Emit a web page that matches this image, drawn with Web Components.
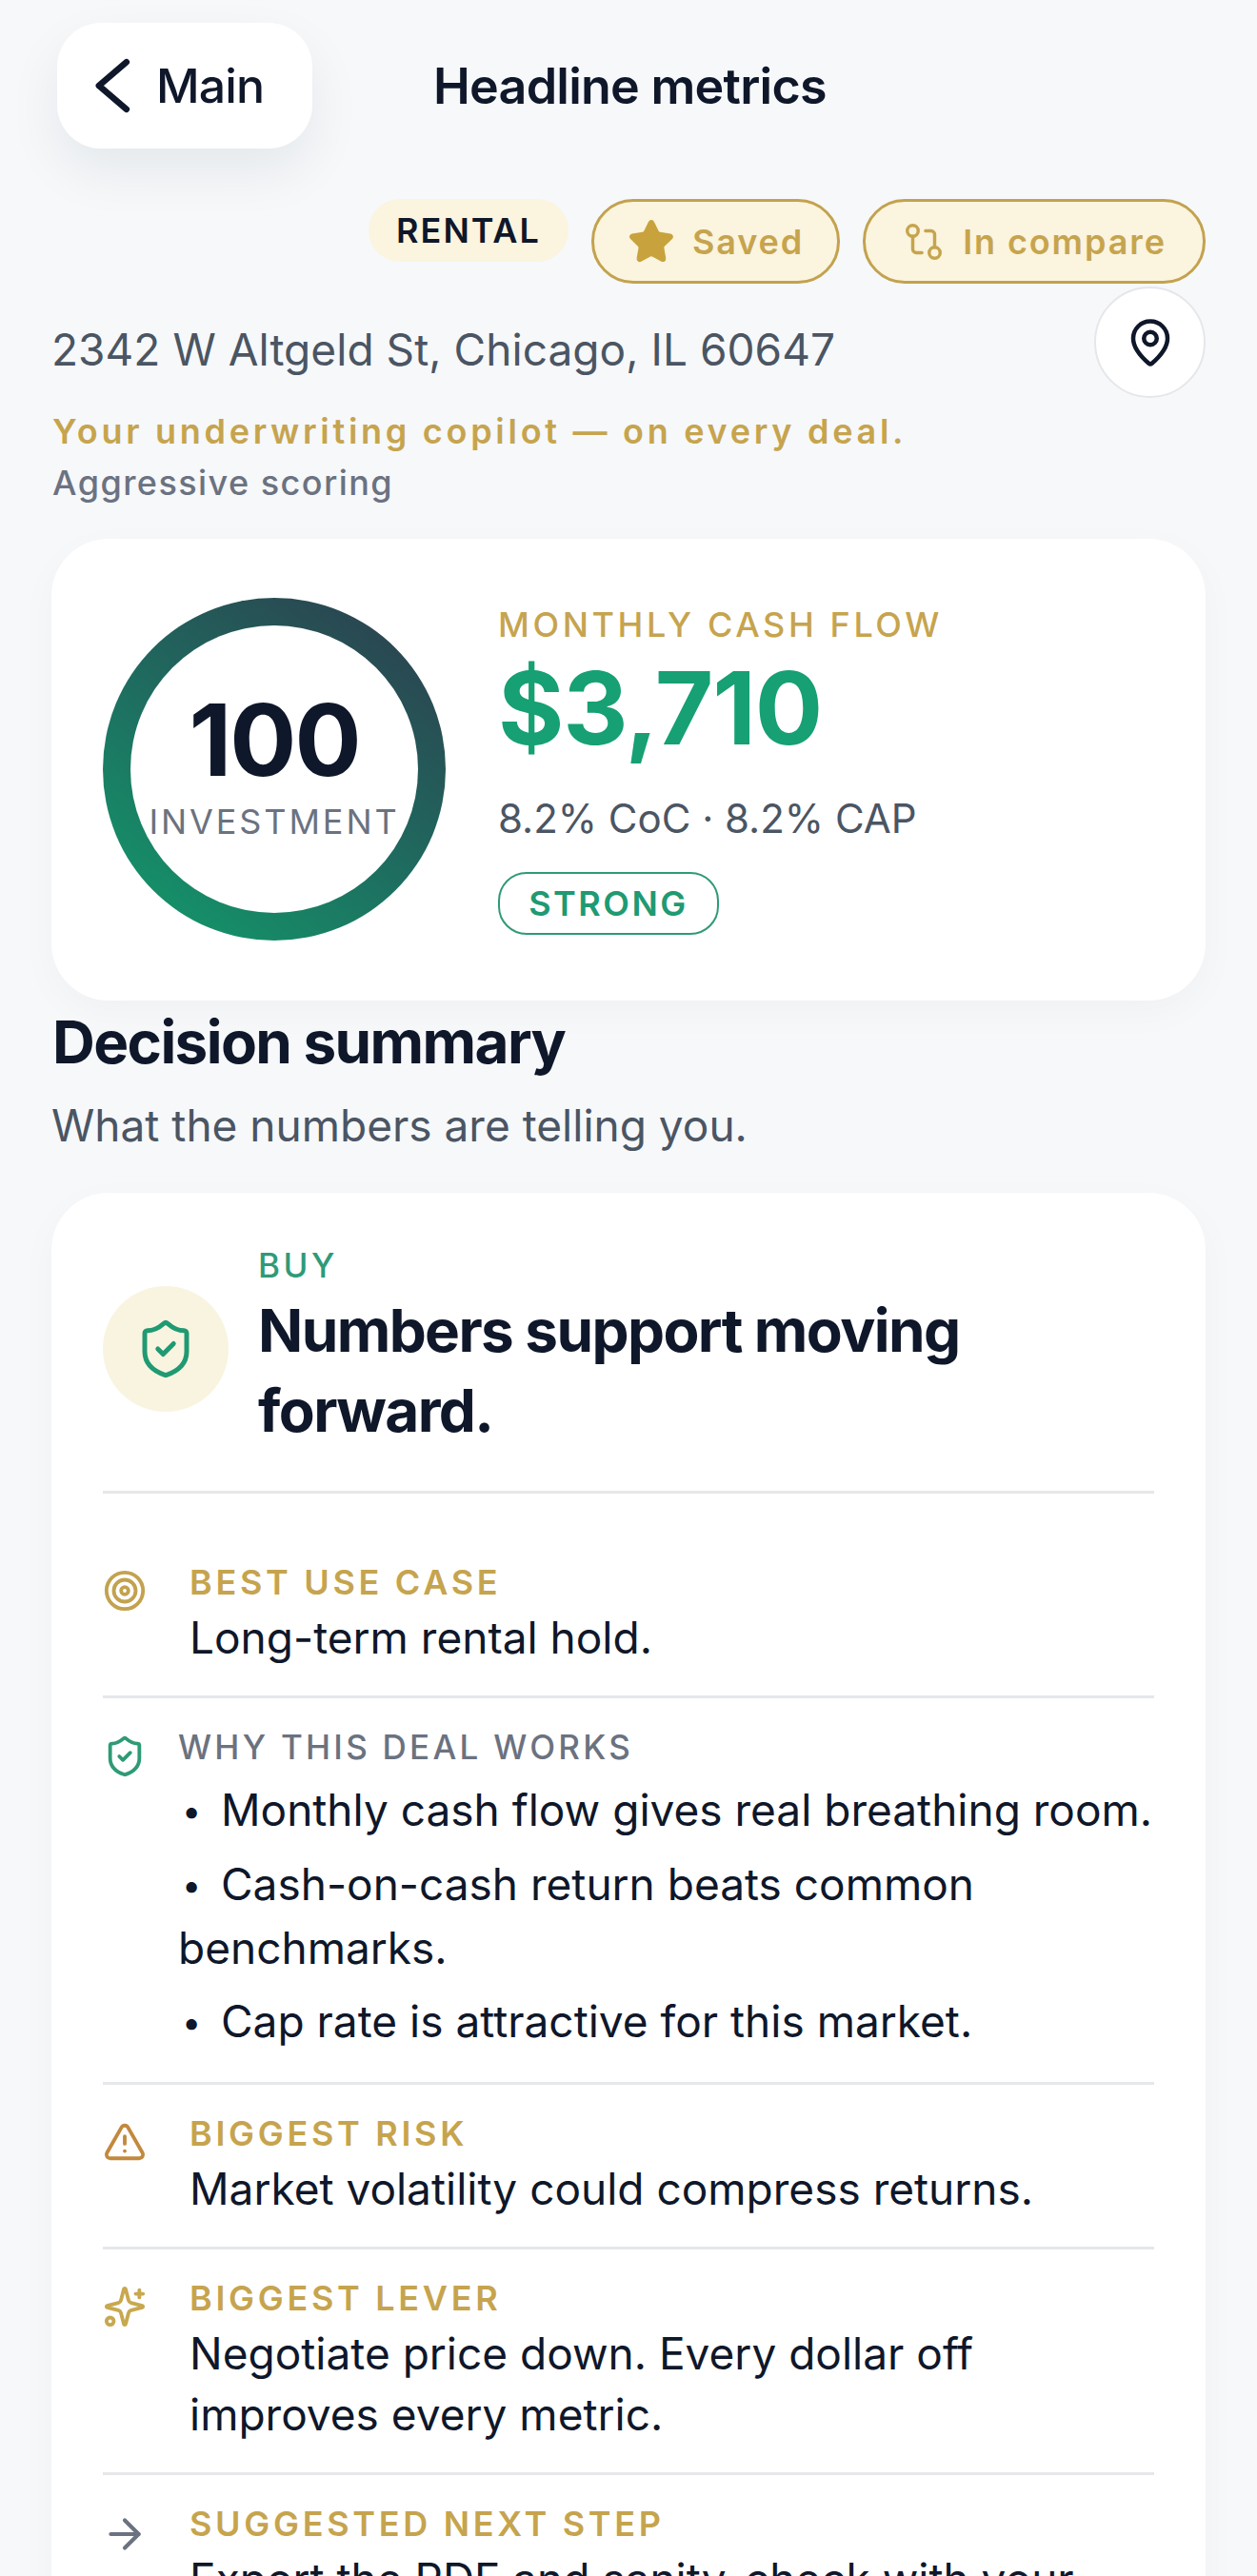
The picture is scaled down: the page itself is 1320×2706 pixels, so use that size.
<!DOCTYPE html>
<html lang="en">
<head>
<meta charset="utf-8">
<title>Headline metrics</title>
<style>
  html, body { margin: 0; height: 2706px; overflow: hidden; background: #f6f8fa; }
  body { font-family: Inter, "Liberation Sans", sans-serif; color: #0f172a; }
</style>
</head>
<body>
  <metrics-page>
    <top-bar slot="top" back="Main" title="Headline metrics"></top-bar>
    <tag-row slot="tags"></tag-row>
    <deal-address slot="address"
      address="2342 W Altgeld St, Chicago, IL 60647"
      tagline="Your underwriting copilot — on every deal."
      mode="Aggressive scoring"></deal-address>
    <score-card slot="score"></score-card>
    <decision-summary slot="summary">
      <detail-row icon="target" label="BEST USE CASE" class="first">Long-term rental hold.</detail-row>
      <detail-row icon="shield" label="WHY THIS DEAL WORKS" variant="list">
        <li>Monthly cash flow gives real breathing room.</li>
        <li>Cash-on-cash return beats common benchmarks.</li>
        <li>Cap rate is attractive for this market.</li>
      </detail-row>
      <detail-row icon="alert" label="BIGGEST RISK">Market volatility could compress returns.</detail-row>
      <detail-row icon="sparkles" label="BIGGEST LEVER">Negotiate price down. Every dollar off improves every metric.</detail-row>
      <detail-row icon="arrow" label="SUGGESTED NEXT STEP">Export the PDF and sanity-check with your lender.</detail-row>
    </decision-summary>
  </metrics-page>

<script>
const ICONS = {
  chevron: '<path d="M17 3 6.5 12 17 21"/>',
  star: '<path fill="currentColor" d="M11.5 2.3a.55.55 0 0 1 1 0l2.3 4.7a2 2 0 0 0 1.5 1.1l5.2.8a.55.55 0 0 1 .3.95l-3.75 3.65a2 2 0 0 0-.6 1.8l.9 5.15a.55.55 0 0 1-.8.6l-4.65-2.45a2 2 0 0 0-1.85 0L6.4 21.05a.55.55 0 0 1-.8-.6l.9-5.15a2 2 0 0 0-.6-1.8L2.15 9.85a.55.55 0 0 1 .3-.95l5.2-.8a2 2 0 0 0 1.5-1.1z"/>',
  compare: '<circle cx="18" cy="18" r="3"/><circle cx="6" cy="6" r="3"/><path d="M13 6h3a2 2 0 0 1 2 2v7"/><path d="M11 18H8a2 2 0 0 1-2-2V9"/>',
  pin: '<path d="M20 10c0 4.99-5.54 10.19-7.4 11.8a1 1 0 0 1-1.2 0C9.54 20.19 4 14.99 4 10a8 8 0 0 1 16 0"/><circle cx="12" cy="10" r="3"/>',
  shield: '<path d="M20 13c0 5-3.5 7.5-7.66 8.95a1 1 0 0 1-.67-.01C7.5 20.5 4 18 4 13V6a1 1 0 0 1 1-1c2 0 4.5-1.2 6.24-2.72a1.17 1.17 0 0 1 1.52 0C14.51 3.81 17 5 19 5a1 1 0 0 1 1 1z"/><path d="m9 12 2 2 4-4"/>',
  target: '<circle cx="12" cy="12" r="10"/><circle cx="12" cy="12" r="6"/><circle cx="12" cy="12" r="2"/>',
  alert: '<path d="m21.73 18-8-14a2 2 0 0 0-3.48 0l-8 14A2 2 0 0 0 4 21h16a2 2 0 0 0 1.73-3"/><path d="M12 9v4"/><path d="M12 17h.01"/>',
  sparkles: '<path d="M9.937 15.5A2 2 0 0 0 8.5 14.063l-6.135-1.582a.5.5 0 0 1 0-.962L8.5 9.936A2 2 0 0 0 9.937 8.5l1.582-6.135a.5.5 0 0 1 .963 0L14.063 8.5A2 2 0 0 0 15.5 9.937l6.135 1.581a.5.5 0 0 1 0 .964L15.5 14.063a2 2 0 0 0-1.437 1.437l-1.582 6.135a.5.5 0 0 1-.963 0z"/><path d="M20 3v4"/><path d="M22 5h-4"/><circle cx="4" cy="20" r="2"/>',
  arrow: '<path d="M5 12h14"/><path d="m12 5 7 7-7 7"/>'
};

class AppIcon extends HTMLElement {
  connectedCallback() {
    const size = this.getAttribute('size') || 48;
    const stroke = this.getAttribute('stroke') || 2;
    this.attachShadow({ mode: 'open' }).innerHTML = `
      <style>:host { display: inline-flex; flex: none; } svg { display: block; }</style>
      <svg width="${size}" height="${size}" viewBox="0 0 24 24" fill="none" stroke="currentColor"
        stroke-width="${stroke}" stroke-linecap="round" stroke-linejoin="round">${ICONS[this.getAttribute('name')]}</svg>`;
  }
}
customElements.define('app-icon', AppIcon);

class MetricsPage extends HTMLElement {
  constructor() {
    super();
    this.attachShadow({ mode: 'open' }).innerHTML = `
      <style>
        :host { display: block; padding: 24px 54px 0; }
      </style>
      <slot name="top"></slot>
      <slot name="tags"></slot>
      <slot name="address"></slot>
      <slot name="score"></slot>
      <slot name="summary"></slot>`;
  }
}
customElements.define('metrics-page', MetricsPage);

class TopBar extends HTMLElement {
  connectedCallback() {
    this.attachShadow({ mode: 'open' }).innerHTML = `
      <style>
        :host { display: flex; align-items: center; gap: 127px; height: 132px; margin-left: 6px; }
        .back {
          display: flex; align-items: center; gap: 12px;
          width: 268px; height: 132px; box-sizing: border-box; padding-left: 26px;
          background: #fff; border-radius: 46px; color: #0f172a;
          box-shadow: 0 24px 56px rgba(15, 23, 42, 0.07);
          font-size: 50px; font-weight: 500; letter-spacing: -0.9px;
        }
        h1 { margin: 0; font-size: 52px; font-weight: 600; letter-spacing: -0.75px; color: #0f172a; }
      </style>
      <div class="back"><app-icon name="chevron" size="66" stroke="2.4"></app-icon><span>${this.getAttribute('back')}</span></div>
      <h1>${this.getAttribute('title')}</h1>`;
  }
}
customElements.define('top-bar', TopBar);

class TagRow extends HTMLElement {
  constructor() {
    super();
    this.attachShadow({ mode: 'open' }).innerHTML = `
      <style>
        :host { display: flex; justify-content: flex-end; align-items: flex-start; gap: 24px; margin-top: 53px; }
        .pill {
          display: flex; align-items: center; justify-content: center; box-sizing: border-box;
          background: #fbf4de; border-radius: 44px;
        }
        .type { width: 210px; height: 66px; font-size: 36px; font-weight: 600; letter-spacing: 2px; color: #0f172a; border-radius: 33px; }
        .toggle {
          height: 89px; gap: 18px; border: 3px solid #c3a24f; color: #c6a44e;
          font-size: 36px; font-weight: 600; letter-spacing: 1.9px;
        }
        .saved { width: 261px; }
        .compare { width: 360px; }
        .saved app-icon { color: #c8a23c; }
      </style>
      <div class="pill type">RENTAL</div>
      <div class="pill toggle saved"><app-icon name="star" size="50"></app-icon><span>Saved</span></div>
      <div class="pill toggle compare"><app-icon name="compare" size="46" stroke="1.8"></app-icon><span>In compare</span></div>`;
  }
}
customElements.define('tag-row', TagRow);

class DealAddress extends HTMLElement {
  connectedCallback() {
    this.attachShadow({ mode: 'open' }).innerHTML = `
      <style>
        :host { display: block; margin-top: 3px; height: 265px; }
        .line { display: flex; justify-content: space-between; align-items: center; height: 117px; }
        .address { padding-top: 14px; font-size: 46px; letter-spacing: 0.05px; color: #4b5563; }
        .map {
          width: 117px; height: 117px; box-sizing: border-box; border-radius: 50%;
          border: 2px solid #e5e7eb; background: #fff; color: #0f172a;
          display: flex; align-items: center; justify-content: center;
        }
        .tagline { margin: 15px 0 0 1px; font-size: 36px; font-weight: 600; line-height: 40px; letter-spacing: 3.72px; color: #c6a44e; }
        .mode { margin: 14px 0 0 1px; font-size: 36px; font-weight: 500; line-height: 40px; letter-spacing: 1.44px; color: #6b7280; }
      </style>
      <div class="line"><span class="address">${this.getAttribute('address')}</span>
        <div class="map"><app-icon name="pin" size="54"></app-icon></div></div>
      <div class="tagline">${this.getAttribute('tagline')}</div>
      <div class="mode">${this.getAttribute('mode')}</div>`;
  }
}
customElements.define('deal-address', DealAddress);

class ScoreCard extends HTMLElement {
  constructor() {
    super();
    this.attachShadow({ mode: 'open' }).innerHTML = `
      <style>
        :host {
          display: flex; align-items: flex-start; gap: 55px; box-sizing: border-box; height: 485px;
          padding: 62px 54px 0; background: #fff; border-radius: 60px;
          box-shadow: 0 12px 40px rgba(15, 23, 42, 0.03);
        }
        .ring {
          flex: none; width: 360px; height: 360px; border-radius: 50%; box-sizing: border-box; padding: 29px;
          background: linear-gradient(215deg, #2b4450 10%, #1f6a5f 50%, #159068 88%);
        }
        .inner {
          width: 100%; height: 100%; border-radius: 50%; background: #fff;
          display: flex; flex-direction: column; align-items: center; padding-top: 66px; box-sizing: border-box;
        }
        .score { font-size: 104px; font-weight: 700; line-height: 108px; letter-spacing: -2px; color: #0f172a; }
        .kind { margin-top: 10px; font-size: 36px; line-height: 44px; letter-spacing: 2.9px; color: #6b7280; white-space: nowrap; }
        .label { margin-top: 8px; font-size: 36px; font-weight: 500; line-height: 40px; letter-spacing: 3.6px; color: #c6a44e; }
        .value { margin-top: 8px; font-size: 106px; font-weight: 700; line-height: 120px; letter-spacing: -1.2px; color: #16a073; }
        .rates { margin-top: 31px; font-size: 42px; line-height: 50px; color: #4b5563; }
        .strength {
          display: inline-flex; align-items: center; justify-content: center; margin-top: 31px;
          width: 232px; height: 66px; box-sizing: border-box; border: 2.5px solid #2f9a78; border-radius: 30px;
          font-size: 36px; font-weight: 600; letter-spacing: 2.5px; color: #1f9a72;
        }
      </style>
      <div class="ring"><div class="inner"><div class="score">100</div><div class="kind">INVESTMENT</div></div></div>
      <div>
        <div class="label">MONTHLY CASH FLOW</div>
        <div class="value">$3,710</div>
        <div class="rates">8.2% CoC · 8.2% CAP</div>
        <div class="strength">STRONG</div>
      </div>`;
  }
}
customElements.define('score-card', ScoreCard);

class DecisionSummary extends HTMLElement {
  constructor() {
    super();
    this.attachShadow({ mode: 'open' }).innerHTML = `
      <style>
        :host { display: block; margin-top: 8px; }
        h2 { margin: 0 0 0 1px; font-size: 62px; font-weight: 700; line-height: 72px; letter-spacing: -1.6px; color: #0f172a; }
        .sub { margin: 23px 0 0; font-size: 46px; line-height: 56px; color: #4b5563; }
        .card {
          margin-top: 43px; box-sizing: border-box; padding: 56px 54px 0;
          background: #fff; border-radius: 60px; box-shadow: 0 12px 40px rgba(15, 23, 42, 0.03);
        }
        .verdict { display: flex; align-items: center; gap: 31px; padding-bottom: 42px; border-bottom: 3px solid #e5e7eb; }
        .badge {
          flex: none; width: 132px; height: 132px; border-radius: 50%; background: #f9f4e0; color: #1f9a72;
          display: flex; align-items: center; justify-content: center;
        }
        .kicker { font-size: 35px; font-weight: 500; line-height: 40px; letter-spacing: 3.6px; color: #2f9a78; }
        .headline { margin-top: 7px; font-size: 62px; font-weight: 700; line-height: 84px; letter-spacing: -1.6px; color: #0f172a; }
      </style>
      <h2>Decision summary</h2>
      <div class="sub">What the numbers are telling you.</div>
      <div class="card">
        <div class="verdict">
          <div class="badge"><app-icon name="shield" size="66" stroke="1.8"></app-icon></div>
          <div><div class="kicker">BUY</div><div class="headline">Numbers support moving forward.</div></div>
        </div>
        <slot></slot>
      </div>`;
  }
}
customElements.define('decision-summary', DecisionSummary);

const ICON_COLORS = { target: '#c3a24f', shield: '#2f9a78', alert: '#c2893d', sparkles: '#c8a84f', arrow: '#6b7280' };

class DetailRow extends HTMLElement {
  connectedCallback() {
    const name = this.getAttribute('icon');
    const list = this.getAttribute('variant') === 'list';
    const size = name === 'arrow' ? 50 : 46;
    this.attachShadow({ mode: 'open' }).innerHTML = `
      <style>
        :host { display: flex; align-items: flex-start; gap: ${list ? 33 : 45}px; padding: 31px 0 ${list ? 30 : 29}px; border-bottom: 3px solid #e5e7eb; }
        :host(.first) { padding-top: 73px; }
        .icon { margin-top: ${list ? 7 : 6}px; width: 46px; color: ${ICON_COLORS[name]}; display: flex; justify-content: center; }
        .label {
          font-size: ${list ? 35 : 36}px; font-weight: ${list ? 500 : 600}; line-height: 40px;
          letter-spacing: ${list ? 3.26 : 3.7}px; color: ${list ? '#6b7280' : '#c6a44e'};
        }
        .body { margin-top: ${list ? 13 : 6}px; font-size: 46px; line-height: ${list ? 66 : 64}px; color: #0f172a; }
        ::slotted(li) { display: block; margin-bottom: 11px; }
        ::slotted(li:last-child) { margin-bottom: 0; }
        ::slotted(li)::before {
          content: "•"; display: inline-block; box-sizing: border-box; width: 45px; padding-left: 4px;
          font-size: 36px; vertical-align: 3px;
        }
      </style>
      <div class="icon"><app-icon name="${name}" size="${size}" stroke="2"></app-icon></div>
      <div><div class="label">${this.getAttribute('label')}</div><div class="body"><slot></slot></div></div>`;
  }
}
customElements.define('detail-row', DetailRow);
</script>
</body>
</html>
